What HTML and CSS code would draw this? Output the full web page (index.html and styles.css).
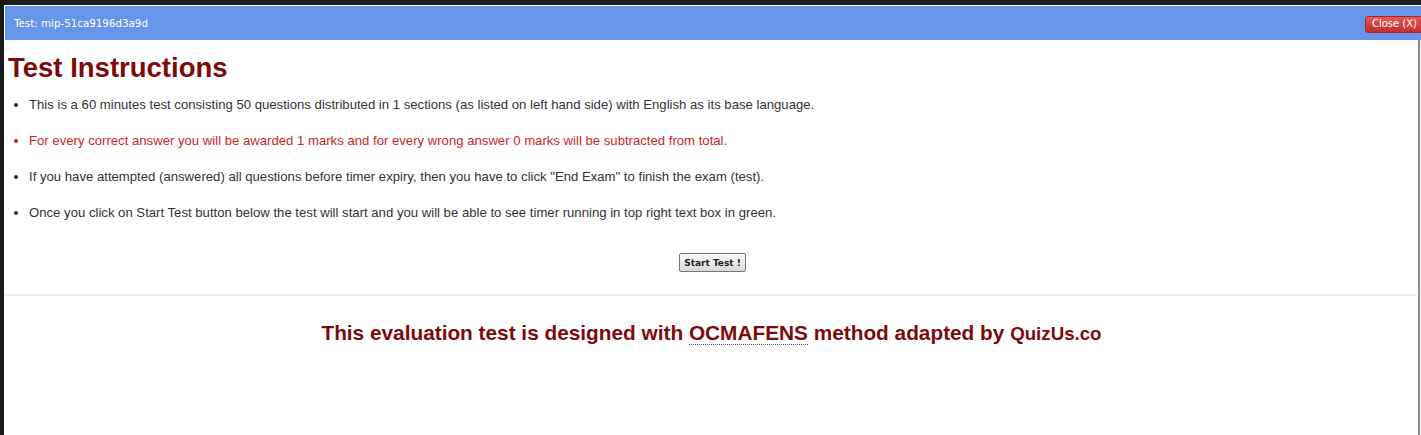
FILE: index.html
```html
<!DOCTYPE html>
<html>
<head>
<meta charset="utf-8">
<title>Test Instructions</title>
<link rel="stylesheet" href="styles.css">
</head>
<body>
<div class="frame">
  <div class="titlebar">
    <span class="test-id">Test: mip-51ca9196d3a9d</span>
    <button class="close-btn">Close (X)</button>
  </div>
  <div class="content">
    <h1 class="heading">Test Instructions</h1>
    <ul class="rules">
      <li>This is a 60 minutes test consisting 50 questions distributed in 1 sections (as listed on left hand side) with English as its base language.</li>
      <li class="warn">For every correct answer you will be awarded 1 marks and for every wrong answer 0 marks will be subtracted from total.</li>
      <li>If you have attempted (answered) all questions before timer expiry, then you have to click "End Exam" to finish the exam (test).</li>
      <li>Once you click on Start Test button below the test will start and you will be able to see timer running in top right text box in green.</li>
    </ul>
    <div class="start-row"><button class="start-btn">Start Test !</button></div>
    <div class="divider"></div>
    <p class="footer-note">This evaluation test is designed with <abbr class="method">OCMAFENS</abbr> method adapted by <span class="brand">QuizUs.co</span></p>
  </div>
</div>
</body>
</html>
```
FILE: styles.css
```css
html, body {
  margin: 0;
  padding: 0;
  height: 100%;
  background: #1a1a1a;
  overflow: hidden;
}
.frame {
  margin: 5px 0 0 4px;
  height: calc(100% - 5px);
  background: #fff;
  display: flex;
  flex-direction: column;
  font-family: "Liberation Sans", Arial, sans-serif;
}
.titlebar {
  height: 35px;
  background: #6795e9;
  border-top: 1px solid #fff;
  border-left: 1px solid #fff;
  display: flex;
  align-items: center;
  justify-content: space-between;
  box-sizing: border-box;
}
.test-id {
  color: #fff;
  font-family: "DejaVu Sans", Verdana, sans-serif;
  font-size: 10.3px;
  margin-left: 9px;
  margin-top: -1px;
}
.close-btn {
  font-family: "DejaVu Sans", Verdana, sans-serif;
  font-size: 10px;
  color: #fff;
  background: linear-gradient(#e05a5a, #c42b2b);
  border: 1px solid #b02424;
  border-radius: 3px;
  padding: 0 5px 0 6px;
  height: 17px;
  line-height: 14px;
  margin-top: 2px;
  margin-right: -2px;
}
.content {
  flex: 1;
  border-right: 2px solid #8a8a8a;
  margin-right: 1px;
  padding-left: 1px;
  padding-top: 1px;
}
.heading {
  margin: 10px 0 0 3px;
  font-size: 27.5px;
  line-height: 34px;
  font-weight: bold;
  color: #7d0a0a;
}
.rules {
  margin: 12px 0 0 0;
  padding-left: 24px;
  font-size: 13.15px;
  color: #333;
}
.rules li {
  line-height: 15px;
  margin-bottom: 21px;
}
.rules li.warn {
  color: #cc1f1f;
}
.start-row {
  display: flex;
  justify-content: center;
  margin-top: 33px;
}
.start-btn {
  font-family: "DejaVu Sans", Verdana, sans-serif;
  font-size: 9px;
  font-weight: bold;
  color: #222;
  background: linear-gradient(#fafafa, #d8d8d8);
  border: 1px solid #777;
  border-radius: 2px;
  height: 19px;
  padding: 0 4px;
  margin-left: 2px;
}
.divider {
  margin-top: 22px;
  height: 0;
  border-top: 2px solid #ececec;
  margin-right: 1px;
}
.footer-note {
  text-align: center;
  margin: 25px 0 0 0;
  font-size: 20.8px;
  font-weight: bold;
  color: #7d0a0a;
}
.method {
  text-decoration: none;
  border-bottom: 1px dotted #555;
}
.brand {
  font-size: 18.7px;
}
```
